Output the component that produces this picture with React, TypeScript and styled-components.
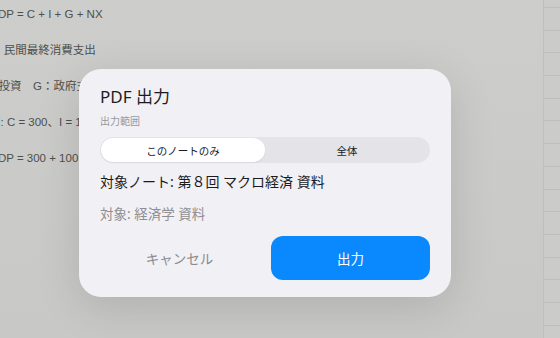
import React, { useState } from "react";
import styled, { createGlobalStyle } from "styled-components";

const GlobalStyle = createGlobalStyle`
  html, body {
    margin: 0;
    padding: 0;
    overflow: hidden;
  }
  body {
    font-family: "Noto Sans", "Noto Sans CJK JP", sans-serif;
  }
`;

const noteLines = [
  "GDP = C + I + G + NX",
  "C: 民間最終消費支出",
  "I: 投資　G：政府支出　NX：純輸出",
  "例: C = 300、I = 100、G = 150、NX = 50",
  "GDP = 300 + 100 + 150 + 50 = 600",
];

export default function App() {
  const [scope, setScope] = useState<"note" | "all">("note");

  return (
    <>
      <GlobalStyle />
      <Screen>
        <NotePane>
          {noteLines.map((line) => (
            <NoteLine key={line}>{line}</NoteLine>
          ))}
        </NotePane>
        <ThumbStrip>
          {Array.from({ length: 15 }).map((_, i) => (
            <ThumbCell key={i} />
          ))}
        </ThumbStrip>

        <Dialog>
          <Title>PDF 出力</Title>
          <Label>出力範囲</Label>
          <Segmented>
            <Segment active={scope === "note"} onClick={() => setScope("note")}>
              このノートのみ
            </Segment>
            <Segment active={scope === "all"} onClick={() => setScope("all")}>
              全体
            </Segment>
          </Segmented>
          <Target>対象ノート: 第８回 マクロ経済 資料</Target>
          <SubTarget>対象: 経済学 資料</SubTarget>
          <Actions>
            <CancelButton>キャンセル</CancelButton>
            <PrimaryButton>出力</PrimaryButton>
          </Actions>
        </Dialog>
      </Screen>
    </>
  );
}

const Screen = styled.div`
  position: relative;
  width: 560px;
  height: 338px;
  display: flex;
  overflow: hidden;
  background: linear-gradient(180deg, #cdcecb 0%, #c8c9c6 100%);
`;

const NotePane = styled.div`
  flex: 1;
  display: flex;
  flex-direction: column;
  gap: 16px;
  padding-top: 4px;
  margin-left: -11px;
  overflow: hidden;
`;

const NoteLine = styled.div`
  font-family: "Liberation Sans", "Noto Sans CJK JP", sans-serif;
  font-size: 11.5px;
  line-height: 20px;
  color: #4e4f4c;
  white-space: nowrap;
`;

const ThumbStrip = styled.div`
  width: 16px;
  border-left: 1px solid #bfc0bd;
  background: #cbcbc9;
  display: flex;
  flex-direction: column;
  padding-top: 7px;
`;

const ThumbCell = styled.div`
  height: 21.7px;
  flex-shrink: 0;
  border-top: 1px solid #bebfbc;
`;

const Dialog = styled.div`
  position: absolute;
  left: 79px;
  top: 69px;
  width: 372px;
  box-sizing: border-box;
  padding: 18px 21px 17px;
  background: #f1f1f5;
  border-radius: 22px;
  box-shadow: 0 10px 44px rgba(0, 0, 0, 0.13);
  display: flex;
  flex-direction: column;
`;

const Title = styled.div`
  font-size: 17px;
  line-height: 20px;
  color: #1c1c1e;
  font-weight: 400;
`;

const Label = styled.div`
  margin-top: 8px;
  font-size: 10px;
  line-height: 12px;
  color: #98989d;
`;

const Segmented = styled.div`
  margin-top: 10px;
  height: 26px;
  box-sizing: border-box;
  padding: 1px;
  border-radius: 13px;
  background: #e3e3e8;
  display: grid;
  grid-template-columns: 1fr 1fr;
`;

const Segment = styled.button<{ active: boolean }>`
  border: none;
  margin: 0;
  padding: 0;
  font-family: inherit;
  font-size: 10.5px;
  color: #1c1c1e;
  border-radius: 12px;
  background: ${(p) => (p.active ? "#ffffff" : "transparent")};
  box-shadow: ${(p) => (p.active ? "0 1px 2px rgba(0,0,0,0.06)" : "none")};
  cursor: pointer;
`;

const Target = styled.div`
  margin-top: 10px;
  font-size: 14px;
  line-height: 18px;
  color: #1c1c1e;
`;

const SubTarget = styled.div`
  margin-top: 14px;
  font-size: 13.5px;
  line-height: 18px;
  color: #8e8e93;
`;

const Actions = styled.div`
  margin-top: 13px;
  display: grid;
  grid-template-columns: 1fr 1fr;
  gap: 12px;
`;

const CancelButton = styled.button`
  height: 44px;
  border: none;
  background: transparent;
  font-family: inherit;
  font-size: 13.5px;
  color: #8a8a8e;
  cursor: pointer;
`;

const PrimaryButton = styled.button`
  height: 44px;
  border: none;
  border-radius: 12px;
  background: #0a89ff;
  font-family: inherit;
  font-size: 13.5px;
  color: #ffffff;
  cursor: pointer;
`;
